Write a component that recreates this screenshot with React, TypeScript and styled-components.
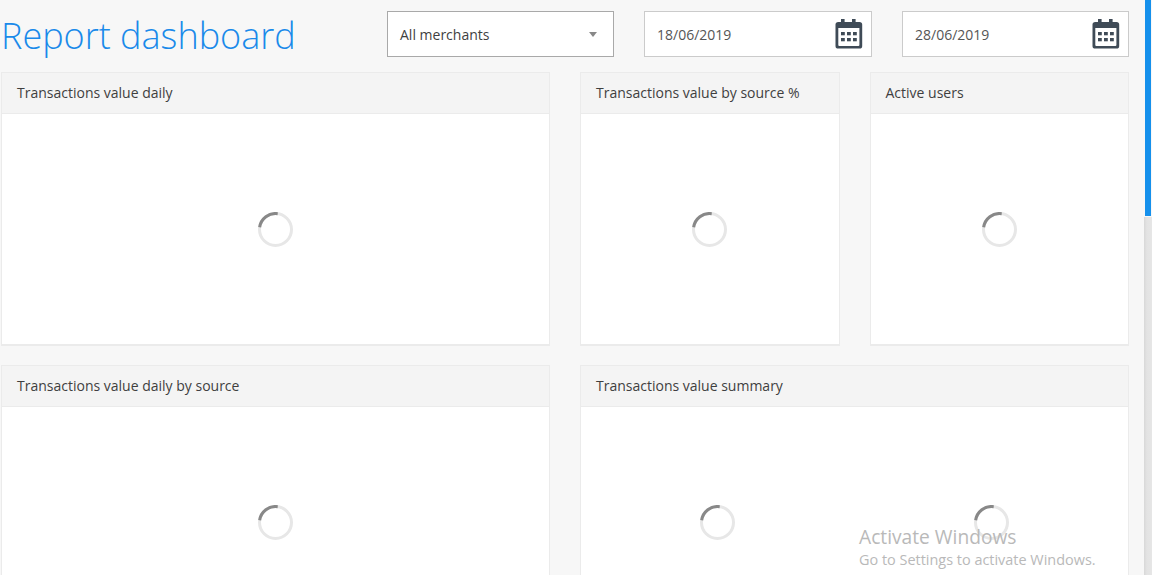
import React from "react";
import styled, { createGlobalStyle } from "styled-components";

const GlobalStyle = createGlobalStyle`
  * { box-sizing: border-box; }
  html, body { margin: 0; height: 100%; overflow: hidden; background: #f7f7f7; }
  body { font-family: "Open Sans", "Noto Sans", sans-serif; font-size: 14px; color: #3f3f3f; }
`;

const Page = styled.div`
  position: relative;
  display: flex;
  height: 575px;
  width: 1152px;
  overflow: hidden;
  background: #f7f7f7;
`;

const Content = styled.main`
  width: 1144px;
  padding: 11px 15px 0 1px;
`;

const Toolbar = styled.header`
  display: flex;
  height: 46px;
  margin-bottom: 15px;
`;

const Title = styled.h1`
  width: 386px;
  margin: 0;
  font-size: 36px;
  font-weight: 300;
  line-height: 50px;
  white-space: nowrap;
  color: #1a8aea;
`;

const Field = styled.div<{ $width: number; $border: string; $gap?: number }>`
  display: flex;
  align-items: center;
  justify-content: space-between;
  width: ${(p) => p.$width}px;
  height: 46px;
  margin-right: ${(p) => p.$gap ?? 0}px;
  padding: 0 8px 0 12px;
  border: 1px solid ${(p) => p.$border};
  background: #fff;
  line-height: 20px;
`;

const FieldText = styled.span<{ $muted?: boolean }>`
  padding-top: 2px;
  color: ${(p) => (p.$muted ? "#555" : "#3f3f3f")};
`;

const Arrow = styled.i`
  border: 4px solid transparent;
  border-top: 5px solid #888;
  border-bottom: 0;
  margin: 1px 8px 0 0;
`;

const Grid = styled.section`
  display: grid;
  grid-template-columns: 549px 259.5px 259.5px;
  grid-template-rows: 274px 274px;
  column-gap: 30px;
  row-gap: 19px;
`;

const Panel = styled.article<{ $wide?: boolean }>`
  display: flex;
  flex-direction: column;
  grid-column: ${(p) => (p.$wide ? "span 2" : "auto")};
  border: 1px solid #ebebeb;
  border-bottom-width: 2px;
  background: #fff;
`;

const PanelTitle = styled.h2`
  height: 41px;
  margin: 0;
  padding: 0 15px;
  border-bottom: 1px solid #ebebeb;
  background: #f4f4f4;
  font-size: 14px;
  font-weight: 400;
  line-height: 40px;
  white-space: nowrap;
`;

const PanelBody = styled.div`
  flex: 1;
  display: flex;
`;

const Slot = styled.div`
  flex: 1;
  display: flex;
  align-items: center;
  justify-content: center;
`;

const Watermark = styled.aside`
  position: absolute;
  left: 859px;
  top: 524px;
  color: #b9b9b9;
  white-space: nowrap;
`;

const WatermarkTitle = styled.div`
  font: 19.2px/26px "Open Sans", sans-serif;
`;

const WatermarkText = styled.div`
  font: 14.45px/20px "Open Sans", sans-serif;
`;

const Scrollbar = styled.div`
  width: 8px;
  height: 575px;
  display: flex;
  flex-direction: column;
`;

const Thumb = styled.div`
  height: 216px;
  margin: 0 1px 1px;
  background: #1590ec;
`;

const Track = styled.div`
  flex: 1;
  background: linear-gradient(90deg, #d8d8d8, #e3e3e3 35%, #e6e6e6);
`;

const Calendar = () => (
  <svg width="28" height="30" viewBox="0 0 28 30" fill="#3f4b57">
    <path
      fillRule="evenodd"
      d="M6 0H9.6V3H17V0H20.6V3H24.5Q27.2 3 27.2 5.6V27Q27.2 29.6 24.5 29.6H3.2Q.5 29.6 .5 27V5.6Q.5 3 3.2 3H6ZM3.3 9V26Q3.3 27 4.3 27H23.4Q24.4 27 24.4 26V9Z"
    />
    {[13, 19].map((y) =>
      [6, 12, 18].map((x) => <rect key={`${x}-${y}`} x={x} y={y} width="3.8" height="3.3" />)
    )}
  </svg>
);

const Spinner = () => (
  <svg width="35" height="35" viewBox="0 0 35 35" fill="none" strokeWidth="3">
    <circle cx="17.5" cy="17.5" r="16" stroke="#e7e7e7" />
    <path d="M1.65 15.3A16 16 0 0 1 19.7 1.65" stroke="#888" />
  </svg>
);

interface PanelData {
  title: string;
  wide?: boolean;
  loaders: number;
}

const panels: PanelData[] = [
  { title: "Transactions value daily", loaders: 1 },
  { title: "Transactions value by source %", loaders: 1 },
  { title: "Active users", loaders: 1 },
  { title: "Transactions value daily by source", loaders: 1 },
  { title: "Transactions value summary", wide: true, loaders: 2 },
];

export default function App() {
  return (
    <>
      <GlobalStyle />
      <Page>
        <Content>
          <Toolbar>
            <Title>Report dashboard</Title>
            <Field $width={227} $border="#a9a9a9" $gap={30}>
              <FieldText>All merchants</FieldText>
              <Arrow />
            </Field>
            <Field $width={228} $border="#cbcbcb" $gap={30}>
              <FieldText $muted>18/06/2019</FieldText>
              <Calendar />
            </Field>
            <Field $width={227} $border="#cbcbcb">
              <FieldText $muted>28/06/2019</FieldText>
              <Calendar />
            </Field>
          </Toolbar>
          <Grid>
            {panels.map((panel) => (
              <Panel key={panel.title} $wide={panel.wide}>
                <PanelTitle>{panel.title}</PanelTitle>
                <PanelBody>
                  {Array.from({ length: panel.loaders }, (_, i) => (
                    <Slot key={i}>
                      <Spinner />
                    </Slot>
                  ))}
                </PanelBody>
              </Panel>
            ))}
          </Grid>
        </Content>
        <Scrollbar>
          <Thumb />
          <Track />
        </Scrollbar>
        <Watermark>
          <WatermarkTitle>Activate Windows</WatermarkTitle>
          <WatermarkText>Go to Settings to activate Windows.</WatermarkText>
        </Watermark>
      </Page>
    </>
  );
}
